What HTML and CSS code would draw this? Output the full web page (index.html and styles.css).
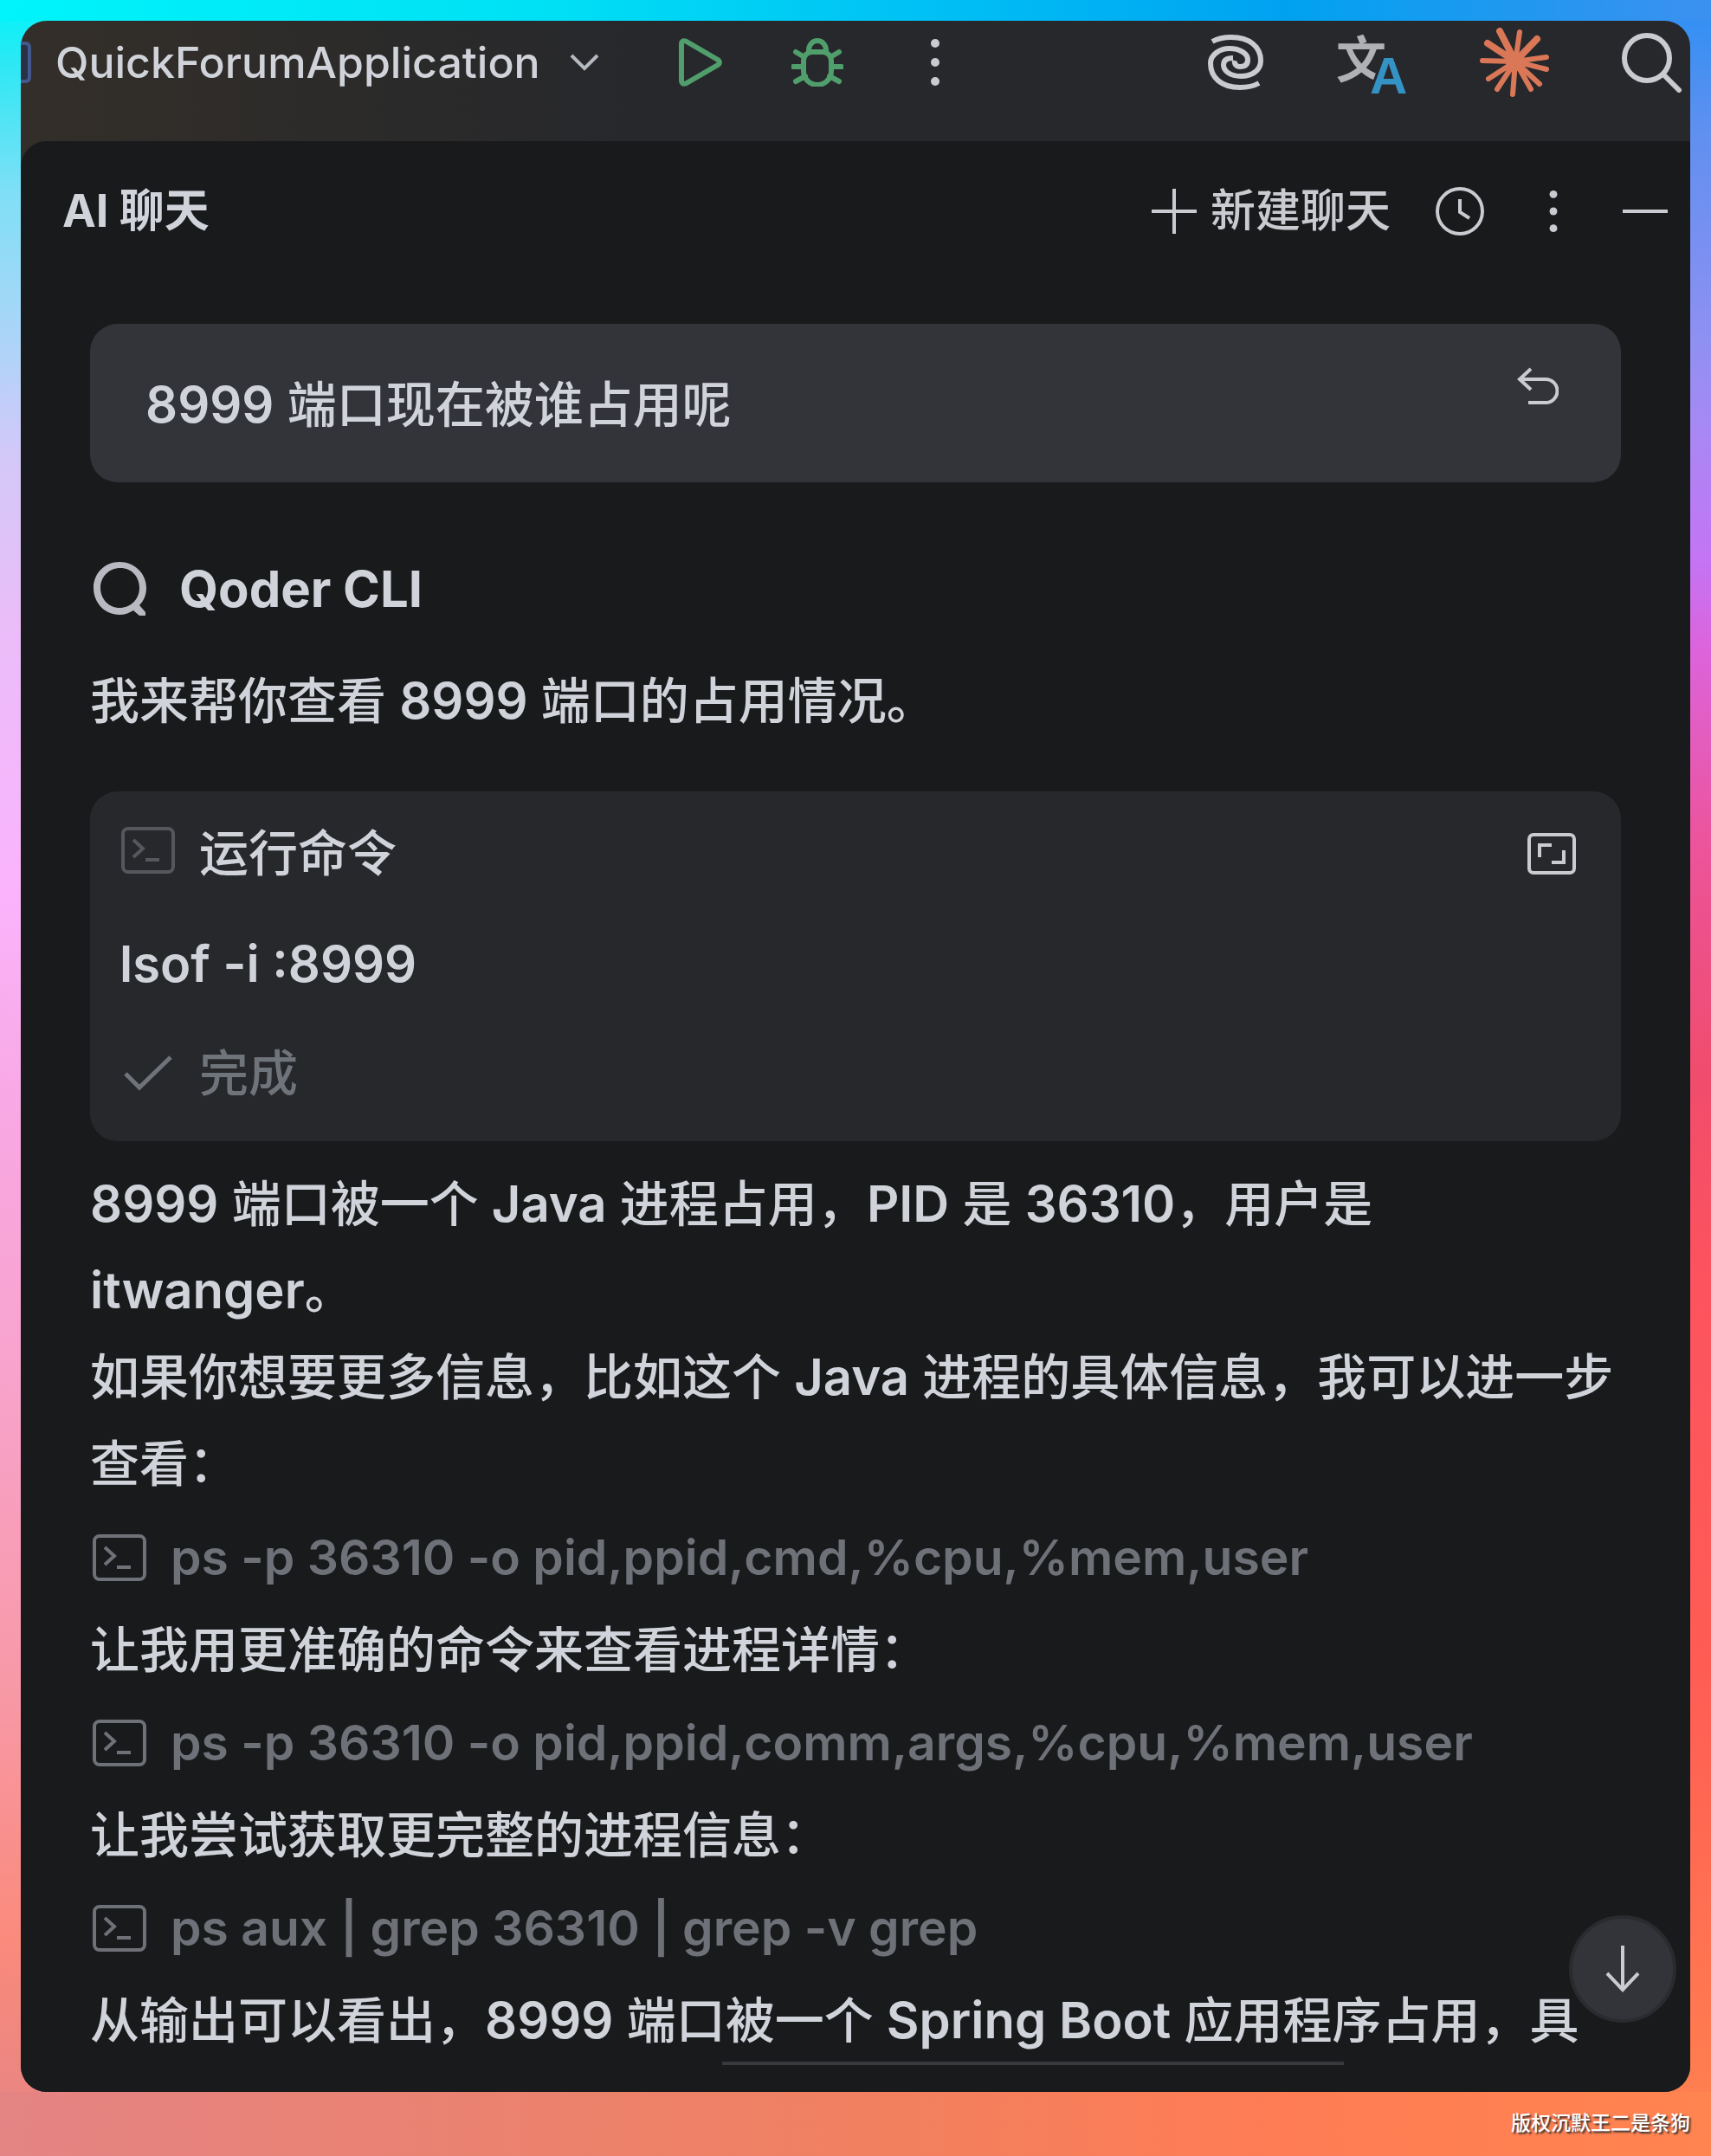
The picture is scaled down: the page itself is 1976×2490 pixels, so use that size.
FILE: index.html
```html
<!DOCTYPE html>
<html lang="zh-CN">
<head>
    <meta charset="UTF-8">
    <title>AI 聊天</title>
    <link rel="stylesheet" href="styles.css">
</head>
<body>
    <svg width="0" height="0" class="sprite" aria-hidden="true">
        <symbol id="terminal" viewBox="0 0 62 54">
            <rect x="2" y="2" width="58" height="50" rx="6" fill="none" stroke="currentColor" stroke-width="4"/>
            <path d="M14 15l11 10-11 10M28 38h16" fill="none" stroke="currentColor" stroke-width="4"/>
        </symbol>
        <symbol id="dots" viewBox="0 0 12 56">
            <circle cx="6" cy="6" r="5"/><circle cx="6" cy="28" r="5"/><circle cx="6" cy="50" r="5"/>
        </symbol>
    </svg>

    <div class="window">
        <header class="toolbar">
            <svg class="app-icon" width="12" height="48" viewBox="0 0 12 48"><path d="M0 2h5q5 0 5 5v34q0 5-5 5H0" fill="#2b3145" stroke="#43588f" stroke-width="4"/></svg>
            <button class="run-config">QuickForumApplication
                <svg width="34" height="20" viewBox="0 0 34 20"><path d="M2 2l15 15L32 2" fill="none" stroke="#b4b8bf" stroke-width="4"/></svg>
            </button>
            <div class="run-actions">
                <button class="green" aria-label="Run"><svg width="50" height="56" viewBox="0 0 50 56"><path d="M3 7v42q0 5 5 3.500L45 31q4-3 0-6L8 3.500Q3 2 3 7z" fill="none" stroke="currentColor" stroke-width="6" stroke-linejoin="round"/></svg></button>
                <button class="green" aria-label="Debug"><svg width="60" height="56" viewBox="0 0 60 56"><path d="M20 17v-3a10 11 0 0 1 20 0v3M24 16h12a10 10 0 0 1 10 10v12a16 16 0 0 1-32 0V26a10 10 0 0 1 10-10zM5 16l10 6M55 16l-10 6M2 33h12M58 33H46M5 50l11-6M55 50l-11-6" fill="none" stroke="currentColor" stroke-width="6" stroke-linecap="round"/></svg></button>
                <button aria-label="More"><svg width="12" height="56" fill="currentColor"><use href="#dots"/></svg></button>
            </div>
            <div class="plugins">
                <button aria-label="AI Assistant"><svg width="64" height="64" viewBox="0 0 64 64"><path d="M5 8C14 3 22 3 27 3C48 3 61 14 61 30C61 42 50 48 38 48C26 48 18 42 18 35C18 29 23 27 29 27M59 56C50 61 42 61 37 61C16 61 3 50 3 33C3 23 14 16 25 16C37 16 46 22 46 29C46 35 42 37 37 37C33 37 30 34 31 30" fill="none" stroke="currentColor" stroke-width="6"/></svg></button>
                <button aria-label="Translate"><svg class="translate" width="82" height="72" viewBox="0 0 82 72"><text x="0" y="54" class="wen">文</text><text x="39" y="72" class="latin-a">A</text></svg></button>
                <button aria-label="Claude"><svg width="80" height="80" viewBox="0 0 80 80"><path d="M41 39L23 4M41 39L9 18M41 39L66 13" fill="none" stroke="#d97757" stroke-width="8" stroke-linecap="round"/><path d="M41 39L46 5M41 39L77 34M41 39L77 48M41 39L69 65M41 39L59 71M41 39L38 77M41 39L20 71M41 39L10 59M41 39L3 38" fill="none" stroke="#d97757" stroke-width="6" stroke-linecap="round"/><circle cx="41" cy="39" r="11" fill="#d97757"/></svg></button>
                <button aria-label="Search"><svg width="70" height="70" viewBox="0 0 70 70"><circle cx="29" cy="30" r="26" fill="none" stroke="currentColor" stroke-width="6"/><path d="M48 49l18 18" stroke="currentColor" stroke-width="6" stroke-linecap="round"/></svg></button>
            </div>
        </header>

        <main class="panel">
            <div class="panel-header">
                <h1>AI 聊天</h1>
                <div class="panel-actions">
                    <button class="new-chat"><svg width="52" height="52" viewBox="0 0 52 52"><path d="M26 0v52M0 26h52" stroke="currentColor" stroke-width="4"/></svg>新建聊天</button>
                    <button aria-label="History"><svg width="56" height="56" viewBox="0 0 56 56"><circle cx="28" cy="28" r="26" fill="none" stroke="currentColor" stroke-width="4"/><path d="M28 14v15l11 7" fill="none" stroke="currentColor" stroke-width="4"/></svg></button>
                    <button aria-label="Options"><svg width="12" height="50" fill="currentColor"><use href="#dots"/></svg></button>
                    <button aria-label="Hide"><svg width="52" height="4" viewBox="0 0 52 4"><path d="M0 2h52" stroke="currentColor" stroke-width="4"/></svg></button>
                </div>
            </div>

            <div class="chat">
                <div class="prompt">
                    <p><b>8999</b> 端口现在被谁占用呢</p>
                    <button aria-label="Undo"><svg width="48" height="44" viewBox="0 0 48 44"><path d="M16 2L3 14l13 12M3 14h30a13 13 0 0 1 0 27H13" fill="none" stroke="currentColor" stroke-width="4"/></svg></button>
                </div>

                <div class="agent">
                    <svg width="64" height="64" viewBox="0 0 64 64"><path d="M31 1C48 1 62 14 62 31C62 39 59 46 54 51L61 59V63H54L47 57C42 60 37 62 31 62C14 62 1 48 1 31C1 14 14 1 31 1zM32 8C19 8 9 18 9 31C9 44 19 54 31 54C44 54 54 44 54 31C54 18 45 8 32 8z" fill="#b9bac1" fill-rule="evenodd"/></svg>
                    <h2>Qoder CLI</h2>
                </div>
                <p class="message">我来帮你查看 <b>8999</b> 端口的占用情况。</p>

                <section class="command-card">
                    <div class="row">
                        <svg class="dim" width="62" height="54"><use href="#terminal"/></svg>
                        <span>运行命令</span>
                        <button class="expand" aria-label="Expand"><svg width="56" height="48" viewBox="0 0 56 48"><rect x="2" y="2" width="52" height="44" rx="5" fill="none" stroke="currentColor" stroke-width="4"/><path d="M14 28V14h14M42 20v14H28" fill="none" stroke="currentColor" stroke-width="4"/></svg></button>
                    </div>
                    <div class="row"><b>lsof -i :8999</b></div>
                    <div class="row done">
                        <svg width="62" height="44" viewBox="0 0 62 44"><path d="M5 22l16 16L57 3" fill="none" stroke="currentColor" stroke-width="5"/></svg>
                        <span>完成</span>
                    </div>
                </section>

                <p class="message"><b>8999</b> 端口被一个 <b>Java</b> 进程占用，<b>PID</b> 是 <b>36310</b>，用户是 <b>itwanger</b>。</p>
                <p class="message">如果你想要更多信息，比如这个 <b>Java</b> 进程的具体信息，我可以进一步查看：</p>
                <div class="steps">
                    <div class="step"><svg width="62" height="54"><use href="#terminal"/></svg>ps -p 36310 -o pid,ppid,cmd,%cpu,%mem,user</div>
                    <p class="note">让我用更准确的命令来查看进程详情：</p>
                    <div class="step"><svg width="62" height="54"><use href="#terminal"/></svg>ps -p 36310 -o pid,ppid,comm,args,%cpu,%mem,user</div>
                    <p class="note">让我尝试获取更完整的进程信息：</p>
                    <div class="step"><svg width="62" height="54"><use href="#terminal"/></svg>ps aux | grep 36310 | grep -v grep</div>
                    <p class="note">从输出可以看出，<b>8999</b> 端口被一个 <b>Spring Boot</b> 应用程序占用，具</p>
                </div>
            </div>

            <div class="resize-handle"></div>
            <button class="scroll-down" aria-label="Scroll to bottom"><svg width="42" height="54" viewBox="0 0 42 54"><path d="M21 0v50M3 32l18 19 18-19" fill="none" stroke="currentColor" stroke-width="4"/></svg></button>
        </main>
    </div>
    <footer>版权沉默王二是条狗</footer>
</body>
</html>
```

FILE: styles.css
```css
* {
    box-sizing: border-box;
}
body {
    margin: 0;
    padding: 24px 24px 0;
    min-height: 100vh;
    display: flex;
    flex-direction: column;
    font-family: Inter, "Noto Sans CJK SC", sans-serif;
    font-size: 57px;
    font-weight: 500;
    color: #d1d3da;
    background:
        linear-gradient(to right, #00f4fa, #00e0f5 32%, #00b8f4 60%, #00a2f0 75%, #3c90f0) top / 100% 24px no-repeat,
        linear-gradient(to right, #e48484, #f08060 50%, #ff7c54 75%, #ff8450) bottom / 100% 74px no-repeat,
        linear-gradient(#00f4fa, #2ee8f4 3%, #80dff6 9%, #aed4f8 16%, #d2c8f8 21%, #eabcf8 29%, #fab4fc 41%, #f8a8e4 51%, #f8a4d0 62%, #f899a8 78%, #fa8a7c 90%, #e48484) left / 50% 100% no-repeat,
        linear-gradient(#2c90f4, #5f90f0 6%, #9090f2 16%, #a888f4 20%, #c474f4 26%, #dc64dc 30%, #ec549c 39%, #f04c6c 50%, #fc5260 58%, #ff5c54 77%, #ff7c50 96%, #fc8850) right / 50% 100% no-repeat;
}
h1, h2, p {
    margin: 0;
}
b {
    font-size: 58px;
    font-weight: 600;
    line-height: 1;
}
svg {
    display: block;
    flex: none;
}
button {
    display: flex;
    align-items: center;
    padding: 0;
    border: none;
    background: none;
    color: #c9cbd1;
    font: inherit;
    cursor: pointer;
}
.sprite {
    position: absolute;
}
.window {
    flex: 1;
    display: flex;
    flex-direction: column;
    border-radius: 30px;
    overflow: hidden;
    background: linear-gradient(to right, #332e29, #2c2b2a 20%, #27282c 36%);
}

/* top toolbar */
.toolbar {
    height: 139px;
    padding: 0 9px 43px 0;
    display: flex;
    align-items: center;
}
.app-icon {
    margin-right: 28px;
}
.run-config {
    gap: 34px;
    font-size: 50px;
    color: #d1d3da;
}
.run-actions {
    display: flex;
    align-items: center;
    gap: 80px;
    margin-left: 92px;
}
.run-actions .green {
    color: #4f9e6b;
}
.run-actions button:last-child {
    margin-left: 20px;
}
.plugins {
    display: flex;
    align-items: center;
    gap: 84px;
    margin-left: auto;
}
.translate {
    overflow: visible;
}
.wen {
    font: bold 58px "Noto Sans CJK SC", sans-serif;
    fill: #b0b1b3;
}
.latin-a {
    font: bold 60px "Liberation Sans", sans-serif;
    fill: #3592c4;
    stroke: #27282c;
    stroke-width: 6px;
    paint-order: stroke;
}

/* chat panel */
.panel {
    position: relative;
    flex: 1;
    border-radius: 30px 0 0 0;
    background: #191a1c;
}
.panel-header {
    height: 162px;
    padding: 0 26px 0 48px;
    display: flex;
    align-items: center;
    justify-content: space-between;
    line-height: 60px;
}
.panel-header h1 {
    font-size: 52px;
    font-weight: 700;
}
.panel-actions {
    display: flex;
    align-items: center;
    gap: 74px;
}
.new-chat {
    gap: 16px;
    font-size: 52px;
    line-height: 60px;
    margin-right: -22px;
}
.chat {
    padding: 49px 80px 0;
}
.prompt {
    display: flex;
    align-items: flex-start;
    justify-content: space-between;
    padding: 44px 72px 39px 64px;
    border-radius: 32px;
    background: #333439;
    line-height: 100px;
}
.prompt button {
    padding-top: 6px;
}
.agent {
    display: flex;
    align-items: center;
    gap: 36px;
    padding: 72px 3px 29px;
}
.agent h2 {
    font-size: 58px;
    font-weight: 700;
    line-height: 102px;
}
.message {
    line-height: 100px;
}
.command-card {
    margin: 54px 0 23px;
    padding: 8px 52px 15px 34px;
    border-radius: 32px;
    background: #27282c;
}
.row {
    display: flex;
    align-items: center;
    gap: 28px;
    height: 127px;
    line-height: 127px;
}
.row > svg {
    margin-left: 2px;
}
.row .dim {
    margin-bottom: 8px;
    color: #55575d;
}
.row.done {
    color: #6f737a;
}
.expand {
    margin-left: auto;
}
.steps {
    padding-top: 4px;
}
.step, .note {
    line-height: 107px;
}
.step {
    display: flex;
    align-items: center;
    gap: 28px;
    padding-left: 3px;
    font-weight: 600;
    color: #6f7179;
}

/* floating over the chat */
.resize-handle {
    position: absolute;
    left: 42%;
    right: 400px;
    bottom: 31px;
    height: 4px;
    background: #38393d;
}
.scroll-down {
    position: absolute;
    right: 16px;
    bottom: 80px;
    width: 124px;
    height: 124px;
    justify-content: center;
    border: 4px solid #2a2b2f;
    border-radius: 50%;
    background: #333439;
}

footer {
    height: 74px;
    line-height: 72px;
    text-align: right;
    font-size: 23px;
    font-weight: 500;
    color: #fff;
    text-shadow: 2px 2px 2px #333;
}
```
